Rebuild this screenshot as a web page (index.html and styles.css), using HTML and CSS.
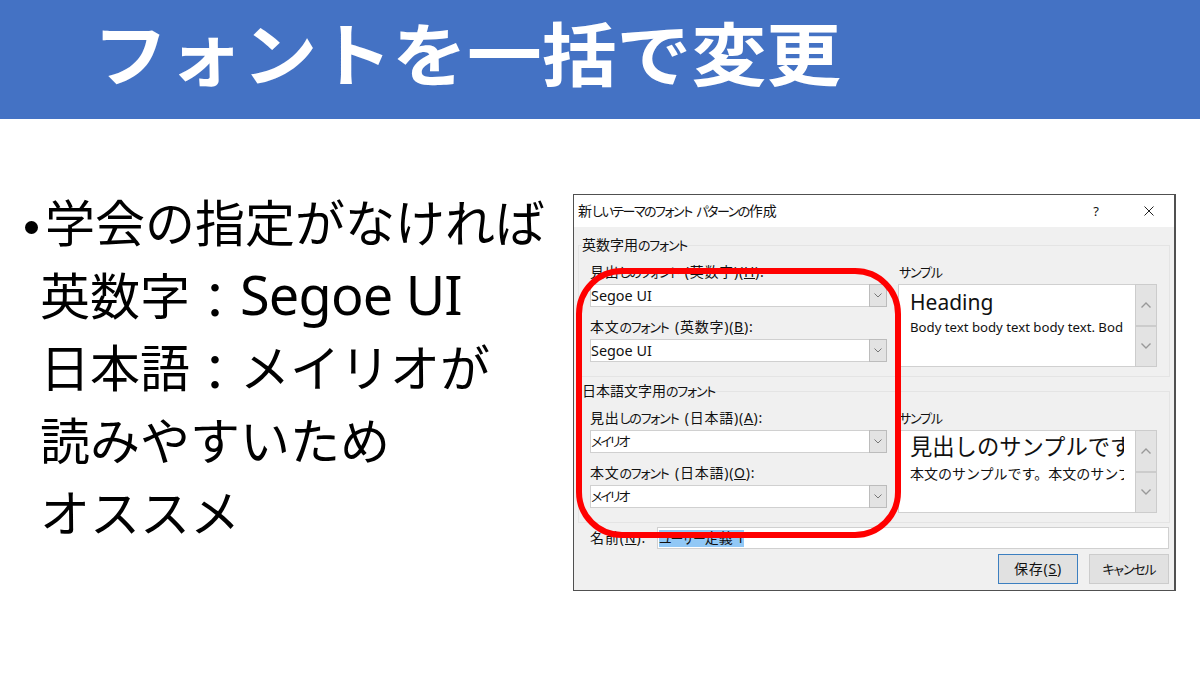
FILE: index.html
```
<!DOCTYPE html>
<html lang="ja">

<head>
    <meta charset="UTF-8">
    <meta name="viewport" content="width=device-width, initial-scale=1.0">
    <title>フォントを一括で変更</title>
    <link rel="stylesheet" href="styles.css">
</head>

<body>

    <header class="title-bar">
        <h1>フォントを一括で変更</h1>
    </header>

    <main class="content">
        <div class="notes">
            <p class="first"><span class="bullet"></span>学会の指定がなければ</p>
            <p>英数字<span class="colon">：</span><span class="latin">Segoe UI</span></p>
            <p>日本語<span class="colon">：</span>メイリオが</p>
            <p>読みやすいため</p>
            <p>オススメ</p>
        </div>

        <!-- フォント設定ダイアログ -->
        <div class="dialog">
            <div class="dialog-title">
                <span class="caption">新<span class="kana">しいテーマのフォント パターンの</span>作成</span>
                <span class="help">?</span>
                <svg class="close" viewBox="0 0 10 10"><path d="M0.5 0.5 L9.5 9.5 M9.5 0.5 L0.5 9.5" /></svg>
            </div>

            <div class="group">
                <div class="legend">英数字用<span class="kana">のフォント</span></div>
                <div class="columns">
                    <div class="fields">
                        <div class="label">見出<span class="kana">しのフォント</span> (英数字)(<u>H</u>):</div>
                        <div class="combo"><span class="value">Segoe UI</span><span class="arrow"><svg viewBox="0 0 8 5"><path d="M0.5 0.5 L4 4 L7.5 0.5" /></svg></span></div>
                        <div class="label second">本文<span class="kana">のフォント</span> (英数字)(<u>B</u>):</div>
                        <div class="combo"><span class="value">Segoe UI</span><span class="arrow"><svg viewBox="0 0 8 5"><path d="M0.5 0.5 L4 4 L7.5 0.5" /></svg></span></div>
                    </div>
                    <div class="sample">
                        <div class="label"><span class="kana">サンプル</span></div>
                        <div class="preview">
                            <div class="preview-text">
                                <p class="heading">Heading</p>
                                <p class="text">Body text body text body text. Bod</p>
                            </div>
                            <div class="scroll">
                                <span><svg viewBox="0 0 10 6"><path d="M0.5 5.5 L5 1 L9.5 5.5" /></svg></span>
                                <span><svg viewBox="0 0 10 6"><path d="M0.5 0.5 L5 5 L9.5 0.5" /></svg></span>
                            </div>
                        </div>
                    </div>
                </div>
            </div>

            <div class="group">
                <div class="legend">日本語文字用<span class="kana">のフォント</span></div>
                <div class="columns">
                    <div class="fields">
                        <div class="label">見出<span class="kana">しのフォント</span> (日本語)(<u>A</u>):</div>
                        <div class="combo"><span class="value kana">メイリオ</span><span class="arrow"><svg viewBox="0 0 8 5"><path d="M0.5 0.5 L4 4 L7.5 0.5" /></svg></span></div>
                        <div class="label second">本文<span class="kana">のフォント</span> (日本語)(<u>O</u>):</div>
                        <div class="combo"><span class="value kana">メイリオ</span><span class="arrow"><svg viewBox="0 0 8 5"><path d="M0.5 0.5 L4 4 L7.5 0.5" /></svg></span></div>
                    </div>
                    <div class="sample">
                        <div class="label"><span class="kana">サンプル</span></div>
                        <div class="preview">
                            <div class="preview-text ja">
                                <p class="heading">見出しのサンプルです</p>
                                <p class="text">本文のサンプルです。本文のサンプ</p>
                            </div>
                            <div class="scroll">
                                <span><svg viewBox="0 0 10 6"><path d="M0.5 5.5 L5 1 L9.5 5.5" /></svg></span>
                                <span><svg viewBox="0 0 10 6"><path d="M0.5 0.5 L5 5 L9.5 0.5" /></svg></span>
                            </div>
                        </div>
                    </div>
                </div>
            </div>

            <div class="name-row">
                <span class="name-label">名前(<u>N</u>):</span>
                <div class="name-input"><span class="selected"><span class="kana">ユーザー</span>定義 1</span></div>
            </div>

            <div class="buttons">
                <div class="button default">保存(<u>S</u>)</div>
                <div class="button"><span class="kana">キャンセル</span></div>
            </div>

            <!-- 赤枠 -->
            <div class="highlight"></div>
        </div>
    </main>

</body>

</html>
```
FILE: styles.css
```
body {
    margin: 0;
    background-color: #ffffff;
    color: #000000;
    font-family: "Noto Sans", "Noto Sans CJK JP", sans-serif;
    height: 675px;
    overflow: hidden;
}

p {
    margin: 0;
}

.title-bar {
    height: 119px;
    background-color: #4472c4;
}

h1 {
    margin: 0;
    padding-left: 93px;
    font-family: "Noto Sans CJK JP", sans-serif;
    font-size: 74.8px;
    font-weight: bold;
    line-height: 101px;
    color: #ffffff;
    white-space: nowrap;
    transform: scaleY(0.93);
}

.content {
    display: flex;
    align-items: flex-start;
    padding-top: 75px;
}

.notes {
    flex: none;
    box-sizing: border-box;
    width: 573px;
    padding-left: 40px;
    font-family: "Noto Sans CJK JP", sans-serif;
    font-size: 50px;
    line-height: 72.5px;
    white-space: nowrap;
    margin-top: -10px;
}

.notes .first {
    display: flex;
    align-items: center;
    margin-left: -15px;
}

.notes .bullet {
    width: 13px;
    height: 13px;
    margin: 14px 7px 0 0;
    border-radius: 50%;
    background-color: #000000;
}

.notes .colon {
    line-height: 1;
    vertical-align: -4px;
}

.notes .latin {
    font-family: "Noto Sans", sans-serif;
    font-size: 54px;
    line-height: 1;
    letter-spacing: -0.8px;
}

.dialog {
    position: relative;
    flex: none;
    box-sizing: border-box;
    width: 603px;
    height: 397px;
    border: 1px solid #505050;
    border-right-width: 2px;
    background-color: #f0f0f0;
    font-size: 14px;
    color: #111111;
    white-space: nowrap;
}

.kana {
    font-size: 13px;
    font-feature-settings: "palt";
    letter-spacing: -1.2px;
}

.dialog-title {
    display: flex;
    align-items: center;
    height: 32px;
    padding: 0 20px 0 4px;
    background-color: #ffffff;
}

.caption {
    flex: 1;
    padding-bottom: 2px;
}

.caption .kana {
    letter-spacing: -1.5px;
    word-spacing: 3px;
}

.help {
    margin-right: 45px;
    font-size: 13px;
}

.close {
    width: 10px;
    height: 10px;
}

svg {
    display: block;
    fill: none;
    stroke: #222222;
    stroke-width: 1;
}

.group {
    box-sizing: border-box;
    height: 132px;
    margin: 18px 4px 0;
    border: 1px solid #e4e4e4;
}

.group + .group {
    margin-top: 14px;
}

.legend {
    width: fit-content;
    height: 18px;
    line-height: 18px;
    margin: -10px 0 0 3px;
    background-color: #f0f0f0;
}

.columns {
    display: flex;
    gap: 11px;
    padding: 8px 0 0 11px;
}

.fields {
    width: 297px;
}

.sample {
    width: 259px;
}

.label {
    height: 20px;
    line-height: 19px;
    margin-bottom: 2px;
    letter-spacing: 0.75px;
    word-spacing: 2px;
}

.sample .label {
    padding-left: 1px;
}

.label.second {
    margin-top: 10px;
}

.combo {
    display: flex;
    box-sizing: border-box;
    height: 23px;
    border: 1px solid #d0d0d0;
    background-color: #ffffff;
    line-height: 21px;
}

.value {
    flex: 1;
    font-size: 14.4px;
}

.value.kana {
    font-size: 13px;
    letter-spacing: -2px;
}

.arrow {
    display: flex;
    align-items: center;
    justify-content: center;
    box-sizing: border-box;
    width: 18px;
    margin: -1px;
    border: 1px solid #bcbcbc;
    background-color: #e3e3e3;
}

.arrow svg {
    width: 8px;
    height: 5px;
    stroke: #777777;
}

.preview {
    display: flex;
    box-sizing: border-box;
    height: 83px;
    border: 1px solid #d0d0d0;
    background-color: #ffffff;
}

.preview-text {
    flex: 1;
    overflow: hidden;
    margin: 0 12px 0 11px;
}

.preview-text .heading {
    font-size: 21px;
    line-height: 34px;
}

.preview-text .text {
    font-size: 13.2px;
    line-height: 16px;
}

.preview-text.ja {
    font-family: "Noto Sans CJK JP", sans-serif;
}

.preview-text.ja .heading {
    font-size: 22.3px;
    line-height: 29px;
}

.preview-text.ja .text {
    font-size: 14px;
    line-height: 26px;
}

.scroll {
    display: flex;
    flex-direction: column;
    width: 22px;
    margin: -1px;
}

.scroll span {
    flex: 1;
    display: flex;
    align-items: center;
    justify-content: center;
    border: 1px solid #cccccc;
    background-color: #e3e3e3;
}

.scroll svg {
    width: 10px;
    height: 6px;
    stroke: #999999;
    stroke-width: 1.4;
}

.name-row {
    display: flex;
    margin: 4px 5px 0 16px;
    line-height: 22px;
}

.name-label {
    width: 67px;
    letter-spacing: 0.9px;
}

.name-input {
    flex: 1;
    box-sizing: border-box;
    height: 22px;
    border: 1px solid #d0d0d0;
    padding: 2px 1px;
    background-color: #ffffff;
    line-height: 16px;
}

.selected {
    display: inline-block;
    height: 17px;
    background-color: #91c8f6;
}

.buttons {
    display: flex;
    justify-content: flex-end;
    gap: 11px;
    margin: 5px 5px 0 0;
}

.button {
    box-sizing: border-box;
    width: 80px;
    height: 30px;
    border: 1px solid #cccccc;
    background-color: #e1e1e1;
    line-height: 28px;
    text-align: center;
}

.button.default {
    border-color: #3c7fc0;
    letter-spacing: 0.8px;
}

.highlight {
    position: absolute;
    left: 2px;
    top: 73px;
    box-sizing: border-box;
    width: 325px;
    height: 270px;
    border: 6px solid #ff0000;
    border-radius: 46px;
}
```
